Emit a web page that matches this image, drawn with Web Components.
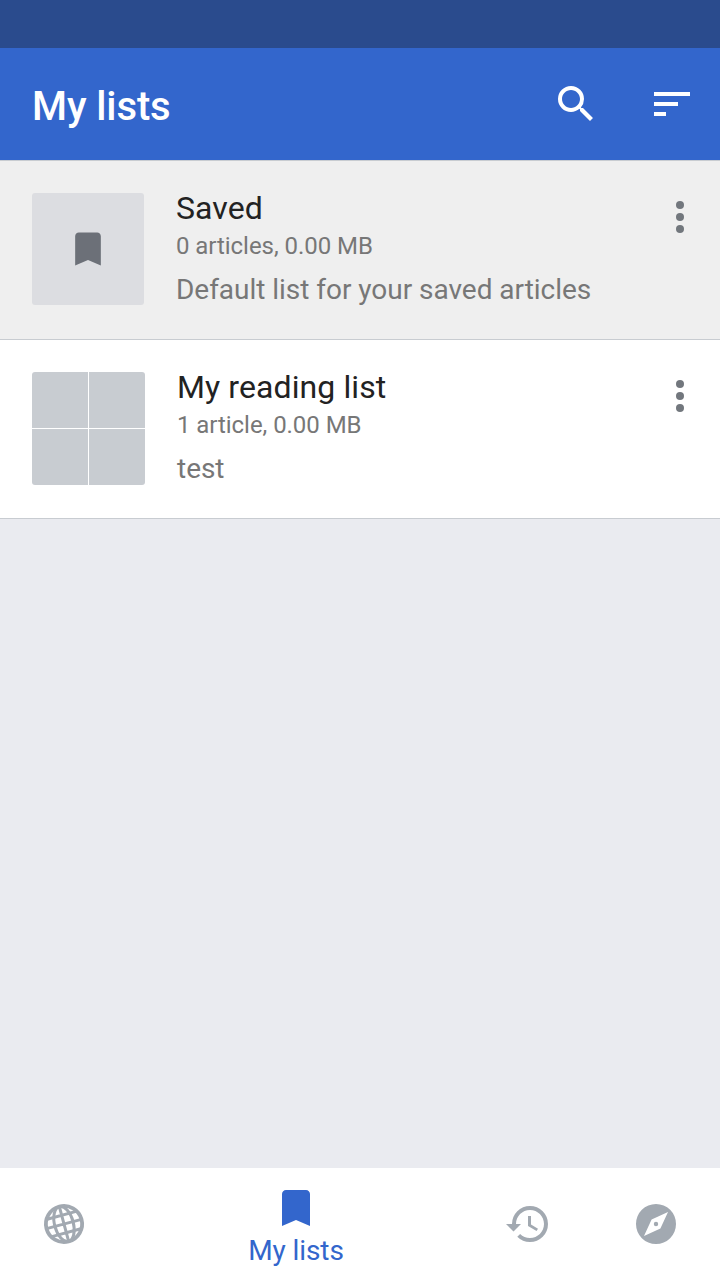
<!DOCTYPE html>
<html lang="en">
<head>
<meta charset="utf-8">
<title>My lists</title>
<style>
html,body{margin:0;height:100%}
body{font-family:Roboto,"Liberation Sans",sans-serif;background:#eaebf0;overflow:hidden}
</style>
</head>
<body>
<lists-screen></lists-screen>
<script>
const icons = {
  search: '<path d="M15.5 14h-.79l-.28-.27A6.471 6.471 0 0 0 16 9.5 6.5 6.5 0 1 0 9.5 16c1.61 0 3.09-.59 4.23-1.57l.27.28v.79l5 4.99L20.49 19l-4.99-5zm-6 0C7.01 14 5 11.99 5 9.5S7.01 5 9.5 5 14 7.01 14 9.5 11.99 14 9.5 14z"/>',
  sort: '<path d="M3 18h6v-2H3v2zM3 6v2h18V6H3zm0 7h12v-2H3v2z"/>',
  more: '<circle cx="12" cy="6" r="2"/><circle cx="12" cy="12" r="2"/><circle cx="12" cy="18" r="2"/>',
  bookmark: '<path d="M17 3H7c-1.1 0-2 .9-2 2v16l7-3 7 3V5c0-1.1-.9-2-2-2z"/>',
  history: '<path d="M13 3a9 9 0 0 0-9 9H1l3.75 3.75L8.5 12H6c0-3.87 3.13-7 7-7s7 3.13 7 7-3.13 7-7 7c-1.93 0-3.68-.79-4.94-2.06l-1.42 1.42A8.954 8.954 0 0 0 13 21a9 9 0 0 0 0-18zm-1 5v5l4.28 2.54.72-1.21-3.5-2.08V8H12z"/>',
  compass: '<path fill-rule="evenodd" d="M12 2a10 10 0 1 0 0 20 10 10 0 0 0 0-20zM18 6l-3.8 8.2L6 18l3.8-8.2zM12 10.9a1.1 1.1 0 1 0 0 2.2 1.1 1.1 0 0 0 0-2.2z"/>',
  globe: '<g fill="none" stroke="currentColor" stroke-width="1.5" transform="rotate(-15 12 12)"><circle cx="12" cy="12" r="9.05" stroke-width="1.9"/><ellipse cx="12" cy="12" rx="4.7" ry="9"/><path d="M12 3v18M3 12h18M4.5 7.5h15M4.5 16.5h15"/></g>'
};
function define(name, html, setup) {
  const template = document.createElement('template');
  template.innerHTML = html;
  customElements.define(name, class extends HTMLElement {
    connectedCallback() {
      if (this.shadowRoot) return;
      this.attachShadow({mode: 'open'}).append(template.content.cloneNode(true));
      if (setup) setup(this);
    }
  });
}
define('ui-icon', `<style>:host{display:block;width:48px;height:48px;flex:none}svg{display:block;width:100%;height:100%;fill:currentColor}</style><svg viewBox="0 0 24 24"></svg>`,
  el => { el.shadowRoot.querySelector('svg').innerHTML = icons[el.getAttribute('name')]; });

define('app-bar', `<style>
:host{display:block;background:#36c;color:#fff;border-top:48px solid #2a4b8d}
.bar{display:flex;align-items:center;height:112px;padding:0 24px 0 32px;box-sizing:border-box}
h1{margin:6px auto 0 0;font-size:40px;font-weight:500;line-height:48px;letter-spacing:-.1px}
.actions{display:flex;gap:48px}
</style><header class="bar"><h1><slot></slot></h1><div class="actions"><slot name="action"></slot></div></header>`);

define('saved-thumb', `<style>
:host{display:flex;align-items:center;justify-content:center;width:112px;height:112px;border-radius:3px;background:#dcdde1;color:#6c7078}
ui-icon{width:44px;height:44px}
</style><ui-icon name="bookmark"></ui-icon>`);

define('grid-thumb', `<style>
:host{display:grid;grid-template:56px 56px/56px 56px;gap:1px;border-radius:3px;overflow:hidden}
i{background:#c8ccd1}
</style><i></i><i></i><i></i><i></i>`);

define('list-row', `<style>
:host{display:flex;box-sizing:border-box;height:179px;padding:32px 16px 0 32px;border-bottom:1px solid #c8ccd1;background:#fff;color:#222}
:host([default]){background:#efefef}
.thumb{flex:none}
.text{flex:1;margin:-5px 0 0 32px;min-width:0;white-space:nowrap}
h2{margin:0;font-size:32px;font-weight:400;line-height:40px;letter-spacing:.1px}
p{margin:0;color:#777}
.meta{font-size:24px;line-height:36px;letter-spacing:-.05px}
.about{font-size:28px;line-height:36px;margin-top:8px;letter-spacing:-.03px}
ui-icon{color:#72777d}
</style><div class="thumb"><slot name="thumb"></slot></div>
<div class="text"><h2><slot></slot></h2><p class="meta"><slot name="meta"></slot></p><p class="about"><slot name="about"></slot></p></div>
<ui-icon name="more"></ui-icon>`);

define('nav-tab', `<style>
:host{display:flex;flex-direction:column;align-items:center;justify-content:center;width:128px;color:#a2a9b1}
:host([active]){width:336px;color:#36c;justify-content:flex-start;padding-top:16px;box-sizing:border-box}
span{font-size:28px;line-height:38px;letter-spacing:-.1px}
:host(:not([active])) span{display:none}
</style><ui-icon></ui-icon><span><slot></slot></span>`, el => {
  const icon = document.createElement('ui-icon');
  icon.setAttribute('name', el.getAttribute('icon'));
  el.shadowRoot.querySelector('ui-icon').replaceWith(icon);
});

define('nav-bar', `<style>:host{display:flex;height:112px;background:#fff}</style><slot></slot>`);

define('lists-screen', `<style>
:host{display:flex;flex-direction:column;height:1280px;width:720px}
main{flex:1;border-top:1px solid #c8ccd1}
</style>
<app-bar>My lists<ui-icon slot="action" name="search"></ui-icon><ui-icon slot="action" name="sort"></ui-icon></app-bar>
<main>
<list-row default><saved-thumb slot="thumb"></saved-thumb>Saved<span slot="meta">0 articles, 0.00 MB</span><span slot="about">Default list for your saved articles</span></list-row>
<list-row><grid-thumb slot="thumb"></grid-thumb>My reading list<span slot="meta">1 article, 0.00 MB</span><span slot="about">test</span></list-row>
</main>
<nav-bar><nav-tab icon="globe"></nav-tab><nav-tab icon="bookmark" active>My lists</nav-tab><nav-tab icon="history"></nav-tab><nav-tab icon="compass"></nav-tab></nav-bar>`);
</script>
</body>
</html>
